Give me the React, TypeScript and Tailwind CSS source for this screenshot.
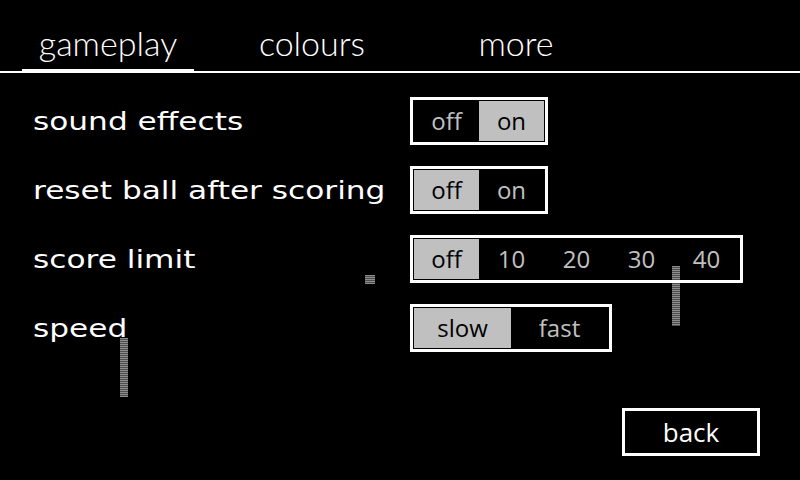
import React from "react";

const stripes =
  "bg-[repeating-linear-gradient(to_bottom,#8c8c8c_0px,#8c8c8c_1px,#4e4e4e_1px,#4e4e4e_2px)]";

function Segmented({
  options,
  selected,
  segW,
}: {
  options: string[];
  selected: number;
  segW: string;
}) {
  return (
    <div className="flex border-[3px] border-white p-px">
      {options.map((o, i) => (
        <div
          key={o}
          className={
            segW +
            " h-[40px] flex items-center justify-center text-[24px] leading-none " +
            (i === selected ? "bg-[#c0c0c0] text-black" : "text-[#c0c0c0]")
          }
        >
          {o}
        </div>
      ))}
    </div>
  );
}

function Row({ label, children }: { label: string; children: React.ReactNode }) {
  return (
    <div className="flex items-center h-[48px]">
      <div className="w-[410px] pl-[33px]">
        <span className="inline-block origin-left scale-x-[1.3] translate-y-[2px] text-white text-[24px] leading-none [font-family:'DejaVu_Sans',sans-serif]">
          {label}
        </span>
      </div>
      {children}
    </div>
  );
}

export default function App() {
  return (
    <div className="relative w-[800px] h-[480px] bg-black overflow-hidden [font-family:'Open_Sans',sans-serif]">
      {/* background game pieces */}
      <div className={"absolute left-[120px] top-[338px] w-[8px] h-[59px] " + stripes} />
      <div className={"absolute left-[672px] top-[266px] w-[8px] h-[60px] " + stripes} />
      <div className={"absolute left-[365px] top-[275px] w-[10px] h-[9px] " + stripes} />

      <div className="relative">
        <div className="h-[73px] flex items-end border-b-2 border-white pl-[22px] gap-[32px] [font-family:Lato,sans-serif] font-light text-white">
          <div className="w-[172px] h-[73px] -mb-[2px] border-b-4 border-white flex justify-center pt-[27px] text-[34px] leading-[32px]">
            gameplay
          </div>
          <div className="w-[172px] h-[73px] -mb-[2px] flex justify-center pt-[27px] text-[34px] leading-[32px]">
            colours
          </div>
          <div className="w-[172px] h-[73px] -mb-[2px] flex justify-center pt-[27px] text-[34px] leading-[32px]">
            more
          </div>
        </div>

        <div className="flex flex-col gap-[21px] pt-[24px]">
          <Row label="sound effects">
            <Segmented options={["off", "on"]} selected={1} segW="w-[65px]" />
          </Row>
          <Row label="reset ball after scoring">
            <Segmented options={["off", "on"]} selected={0} segW="w-[65px]" />
          </Row>
          <Row label="score limit">
            <Segmented options={["off", "10", "20", "30", "40"]} selected={0} segW="w-[65px]" />
          </Row>
          <Row label="speed">
            <Segmented options={["slow", "fast"]} selected={0} segW="w-[97px]" />
          </Row>
        </div>

        <div className="flex justify-end pr-[40px] mt-[56px]">
          <div className="w-[138px] h-[48px] border-[3px] border-white flex items-center justify-center text-white text-[26px] leading-none">
            back
          </div>
        </div>
      </div>
    </div>
  );
}
